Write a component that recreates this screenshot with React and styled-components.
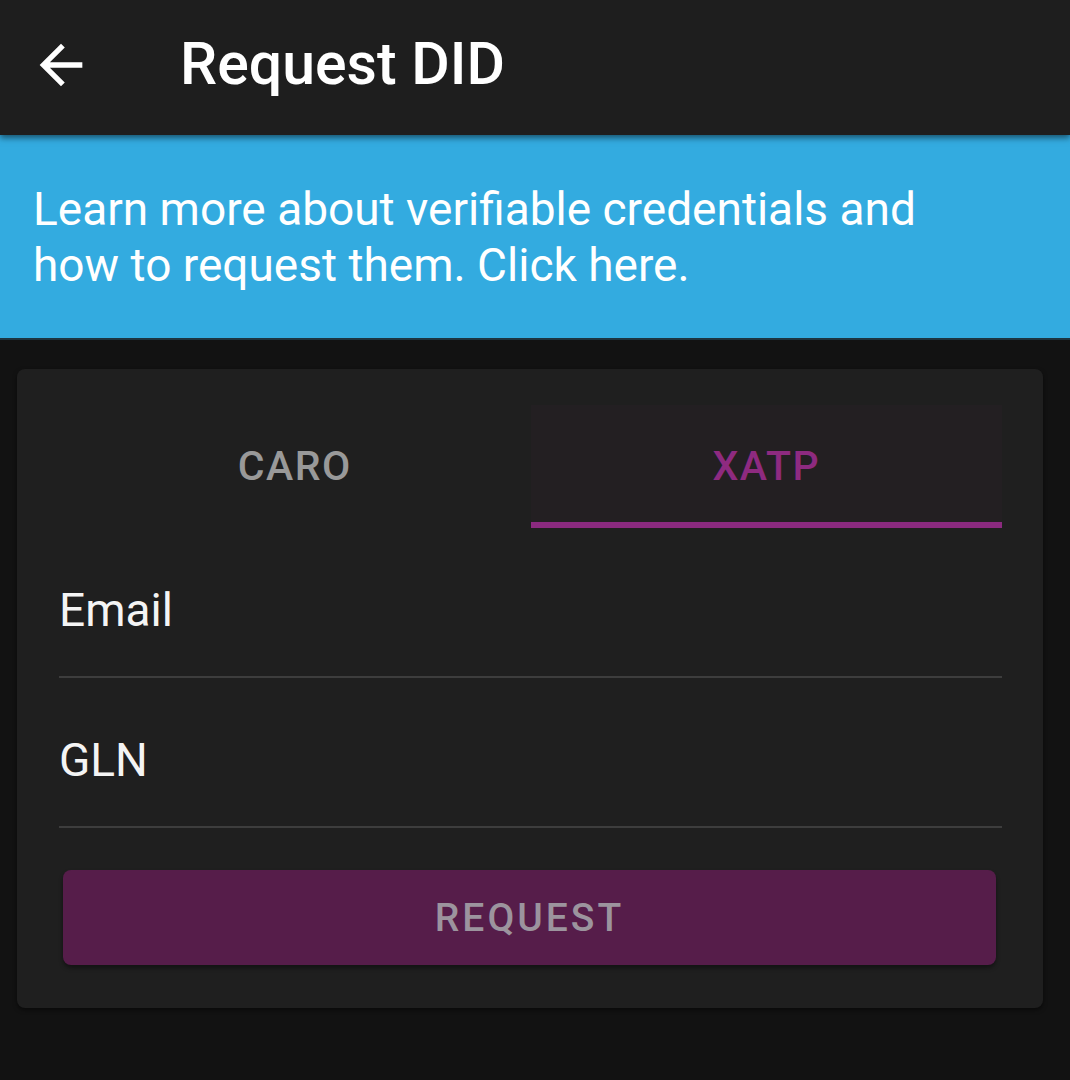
import React, { useState } from 'react'
import styled, { createGlobalStyle } from 'styled-components'

const GlobalStyle = createGlobalStyle`
  body {
    margin: 0;
    background: #121212;
    font-family: Roboto, "Liberation Sans", sans-serif;
  }
`

const tabs = ['CARO', 'XATP']
const fields = ['Email', 'GLN']

const App = () => {
  const [active, setActive] = useState(1)

  return (
    <Page>
      <GlobalStyle />
      <Header>
        <BackButton aria-label="back">
          <svg width="64" height="64" viewBox="0 0 24 24" fill="#ffffff">
            <path d="M20 11H7.83l5.59-5.59L12 4l-8 8 8 8 1.41-1.41L7.83 13H20v-2z" />
          </svg>
        </BackButton>
        <Title>Request DID</Title>
      </Header>

      <Banner>
        Learn more about verifiable credentials and
        <br />
        how to request them. Click here.
      </Banner>

      <Main>
        <Card>
          <TabBar>
            {tabs.map((t, i) => (
              <Tab key={t} active={i === active} onClick={() => setActive(i)}>
                {t}
              </Tab>
            ))}
          </TabBar>
          {fields.map((f) => (
            <Field key={f}>
              <Label>{f}</Label>
            </Field>
          ))}
          <RequestButton disabled>REQUEST</RequestButton>
        </Card>
      </Main>
    </Page>
  )
}

export default App

const Page = styled.div`
  min-height: 1080px;
  background: #121212;
`

const Header = styled.header`
  height: 135px;
  background: #1e1e1e;
  display: flex;
  align-items: center;
  padding-left: 29px;
  box-shadow: 0 3px 6px rgba(0, 0, 0, 0.5);
  position: relative;
  z-index: 1;
`

const BackButton = styled.button`
  width: 64px;
  height: 64px;
  padding: 0;
  border: none;
  background: none;
  display: flex;
  margin-top: -6px;
`

const Title = styled.h1`
  margin: -8px 0 0 87px;
  font-size: 59px;
  font-weight: 500;
  color: #ffffff;
`

const Banner = styled.div`
  background: #33abe0;
  color: #ffffff;
  font-size: 46px;
  line-height: 56px;
  padding: 46px 33px 45px;
  border-bottom: 2px solid #1d3440;
`

const Main = styled.main`
  padding: 29px 27px 0 17px;
`

const Card = styled.section`
  background: #1f1f1f;
  border-radius: 8px;
  padding: 36px 41px 43px 42px;
  box-shadow: 0 2px 4px rgba(0, 0, 0, 0.5);
`

const TabBar = styled.div`
  display: grid;
  grid-template-columns: 1fr 1fr;
  height: 123px;
`

const Tab = styled.div`
  display: flex;
  align-items: center;
  justify-content: center;
  font-size: 41px;
  font-weight: 500;
  letter-spacing: 1.5px;
  padding-top: 4px;
  color: ${(p) => (p.active ? '#8e2a80' : '#999999')};
  background: ${(p) => (p.active ? '#231f22' : 'transparent')};
  border-bottom: 6px solid ${(p) => (p.active ? '#8b2a7f' : 'transparent')};
  cursor: pointer;
`

const Field = styled.div`
  padding: 56px 0 39px;
  border-bottom: 2px solid #3d3d3d;
`

const Label = styled.div`
  font-size: 46px;
  line-height: 53px;
  color: #f4f4f4;
`

const RequestButton = styled.button`
  display: block;
  width: calc(100% - 10px);
  margin: 42px 6px 0 4px;
  height: 95px;
  border: none;
  border-radius: 8px;
  background: #561d4a;
  color: #9c949e;
  font-family: Roboto, "Liberation Sans", sans-serif;
  font-size: 39px;
  font-weight: 500;
  letter-spacing: 3px;
  box-shadow: 0 3px 4px rgba(0, 0, 0, 0.4);
`
